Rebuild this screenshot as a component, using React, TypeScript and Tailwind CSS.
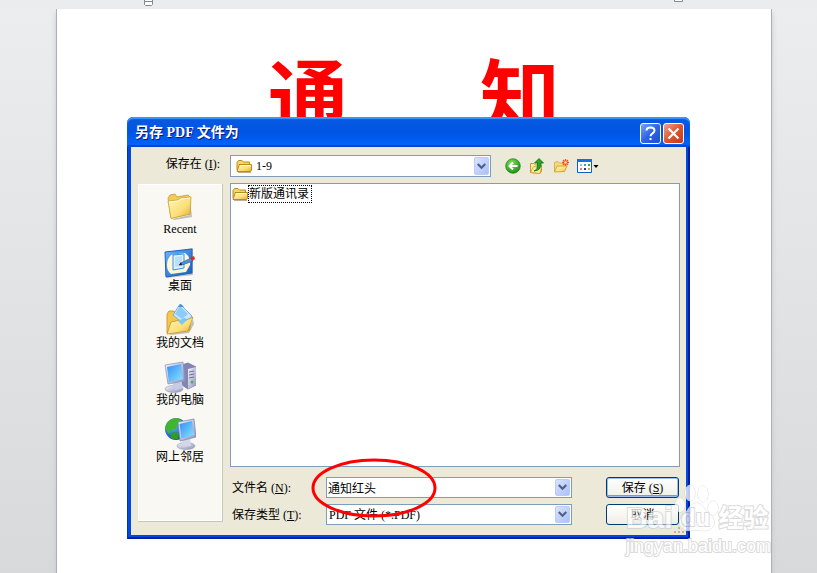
import { useState } from 'react'
import type { ReactNode } from 'react'

const Gradients = () => (
  <svg width="0" height="0" className="absolute" aria-hidden="true">
    <defs>
      <linearGradient id="folder" x1="0" y1="0" x2="1" y2="1">
        <stop offset="0" stopColor="#fff6b8" />
        <stop offset="0.6" stopColor="#fbdf78" />
        <stop offset="1" stopColor="#e2aa2e" />
      </linearGradient>
      <linearGradient id="screen" x1="0" y1="0" x2="1" y2="1">
        <stop offset="0" stopColor="#2f8df5" />
        <stop offset="1" stopColor="#8fe6ff" />
      </linearGradient>
      <linearGradient id="metal" x1="0" y1="0" x2="1" y2="1">
        <stop offset="0" stopColor="#f4f4fb" />
        <stop offset="1" stopColor="#8f92bd" />
      </linearGradient>
      <linearGradient id="desk" x1="0" y1="0" x2="1" y2="1">
        <stop offset="0" stopColor="#6db9f5" />
        <stop offset="1" stopColor="#1659bd" />
      </linearGradient>
      <radialGradient id="green" cx="0.4" cy="0.3" r="0.8">
        <stop offset="0" stopColor="#7fe05a" />
        <stop offset="1" stopColor="#15860f" />
      </radialGradient>
      <radialGradient id="globe" cx="0.35" cy="0.3" r="0.8">
        <stop offset="0" stopColor="#5cc3ff" />
        <stop offset="1" stopColor="#0b3fa8" />
      </radialGradient>
    </defs>
  </svg>
)

const SmallFolder = () => (
  <svg width="16" height="16" viewBox="0 0 16 16" className="shrink-0">
    <path d="M1 12V4.500L2.500 2.500H6L7.500 4H13.500V7" fill="#f7d66c" stroke="#b98a1c" />
    <path d="M1 13.500L3 7.500V6.500H15.500V12L14.500 13.500Z" fill="url(#folder)" stroke="#b98a1c" />
    <path d="M4 7.500H14.500" stroke="#fffbe0" />
    <path d="M2 14.500H15" stroke="#7d6420" strokeOpacity="0.5" />
  </svg>
)

const RecentIcon = () => (
  <svg width="32" height="32" viewBox="0 0 32 32">
    <path d="M8 29L26 25V11L28 27L10 30Z" fill="#555" opacity="0.35" />
    <path d="M4 8L6 5L11 4L13 7L24 5L26 7V24L7 28Z" fill="#f2cb5c" stroke="#c79a2c" strokeWidth="0.8" />
    <path d="M4 11L14 10L17 8L27 7L26 24L7 28.500Z" fill="url(#folder)" stroke="#cfa237" strokeWidth="0.8" />
    <path d="M5 12L14 11L17 9L26 8" fill="none" stroke="#fffbe0" />
  </svg>
)

const DesktopIcon = () => (
  <svg width="32" height="32" viewBox="0 0 32 32">
    <path d="M3 5L29 1L29 28L3 31L1 28Z" fill="#444" opacity="0.3" />
    <path d="M1 5L28 2V26L2 30Z" fill="url(#desk)" stroke="#1a62c0" />
    <path d="M3 18Q3 12 7 8L21 6Q27 10 26 18L22 25L7 27Q3 24 3 18Z" fill="#fdf8d8" />
    <path d="M9 8L20 7V21L9 23Z" fill="#dff1ff" stroke="#3c8fe0" />
    <path d="M11 10L18 9V19L11 20Z" fill="#b8e0fb" />
    <path d="M17 16L27 11L29 14L18 18L15 18Z" fill="#4f93dd" stroke="#1f5cab" strokeWidth="0.7" />
    <path d="M26 11L30 9L31 12L28 14Z" fill="#d7301d" />
    <path d="M15 18L17 15L18 18Z" fill="#222" />
  </svg>
)

const DocumentsIcon = () => (
  <svg width="32" height="32" viewBox="0 0 32 32">
    <path d="M5 30L24 27L29 15L30 20L25 29L7 31Z" fill="#555" opacity="0.35" />
    <path d="M3 29V10L5 7H10L12 10L25 9L26 26Z" fill="#f3c84e" stroke="#c5912a" strokeWidth="0.8" />
    <path d="M16 0L28 12L21 21L9 11Z" fill="#c9e8fd" stroke="#5fa4dd" strokeWidth="0.8" />
    <path d="M16 2L24 10L18 15L11 10Z" fill="#8ecbf7" />
    <path d="M15 2L17 0L20 3H14Z" fill="#3d8fe5" />
    <path d="M3 30L7 18L16 16L18 18L29 13L24 27Z" fill="url(#folder)" stroke="#c5912a" strokeWidth="0.8" />
    <path d="M14 17L20 14L24 15L18 21Z" fill="#7cc6f3" />
  </svg>
)

const ComputerIcon = () => (
  <svg width="32" height="32" viewBox="0 0 32 32">
    <path d="M18 4L24 2L32 6V24L24 28L18 24Z" fill="#8386b5" stroke="#686a9d" strokeWidth="0.7" />
    <path d="M24 8L32 6V24L24 28Z" fill="url(#metal)" />
    <path d="M25 11L30 10M25 14L30 13M25 17L30 16" stroke="#6a6c9c" />
    <circle cx="28" cy="21" r="1.500" fill="#40b840" />
    <ellipse cx="10" cy="28" rx="9" ry="3.500" fill="url(#metal)" stroke="#9295bb" strokeWidth="0.6" />
    <path d="M10 20L18 22L19 27L12 29L8 27Z" fill="#c9cbe4" />
    <path d="M1 4L19 1L21 20L4 23Z" fill="url(#metal)" stroke="#8b8eb5" strokeWidth="0.7" />
    <path d="M3 6L17 3L19 18L5 21Z" fill="url(#screen)" />
  </svg>
)

const NetworkIcon = () => (
  <svg width="32" height="32" viewBox="0 0 32 32">
    <circle cx="12" cy="11" r="11" fill="url(#globe)" />
    <path d="M3 5Q7 0 14 0L18 3L14 6L12 11L7 12L5 16L1 10Z" fill="#41b52c" />
    <path d="M9 14L15 15L14 21Q9 22 6 19Z" fill="#2f9c22" />
    <ellipse cx="22" cy="28" rx="9" ry="3.500" fill="url(#metal)" stroke="#9295bb" strokeWidth="0.6" />
    <path d="M18 21L26 20L27 28L19 29Z" fill="#d5d6e8" />
    <path d="M14 4L30 1L32 19L16 23Z" fill="url(#metal)" stroke="#7d80ac" strokeWidth="0.7" />
    <path d="M15.500 6L28 3L30 17L17.500 20.500Z" fill="url(#screen)" />
  </svg>
)

const BackIcon = () => (
  <svg width="16" height="16" viewBox="0 0 16 16">
    <circle cx="8" cy="8" r="7.300" fill="url(#green)" stroke="#1a7d14" strokeWidth="0.7" />
    <path d="M12.500 8H5M8 4.500L4.500 8L8 11.500" fill="none" stroke="#fff" strokeWidth="2" />
  </svg>
)

const UpIcon = () => (
  <svg width="16" height="16" viewBox="0 0 16 16">
    <path d="M1.500 5.500H5L6.500 7H12.500V13L11 15.500L1.500 14.500Z" fill="url(#folder)" stroke="#c79a2c" />
    <path d="M1.500 14.500L4.500 8.500L12.500 9L11 15.500Z" fill="#fdea9b" stroke="#c79a2c" strokeWidth="0.7" />
    <path d="M5 13Q9 12 8.500 5H5.500L10 0.500L14.500 5H12Q12.500 12.500 5 13Z" fill="#25a521" stroke="#126b16" strokeWidth="0.8" />
  </svg>
)

const NewFolderIcon = () => (
  <svg width="16" height="16" viewBox="0 0 16 16">
    <path d="M1.500 13V4.500L5 3.500L6.500 5H12.500V11Z" fill="#f9db7a" stroke="#d0a53e" strokeWidth="0.8" />
    <path d="M1.500 14L4 8H14L11.500 13.500Z" fill="url(#folder)" stroke="#c79a2c" strokeWidth="0.8" />
    <path d="M12.500 1V8M9 4.500H16M10 2L15 7M15 2L10 7" stroke="#f0552b" strokeWidth="1.300" />
    <circle cx="12.500" cy="4.500" r="1.300" fill="#ffe9a0" />
  </svg>
)

const ViewsIcon = () => (
  <svg width="24" height="16" viewBox="0 0 24 16">
    <path d="M0.500 1.500H14.500V14.500H0.500Z" fill="#fff" stroke="#0a5fc4" />
    <path d="M0 1H15V4H0Z" fill="#1272dc" />
    <path d="M3 6H5V8H3Z" fill="#a9b4e6" />
    <path d="M7 6H9V8H7Z" fill="#3aa0d8" />
    <path d="M11 6H13V8H11Z" fill="#3fa63f" />
    <path d="M3 10H5V12H3Z" fill="#ec8264" />
    <path d="M7 10H9V12H7Z" fill="#1b3f9d" />
    <path d="M11 10H13V12H11Z" fill="#d8a718" />
    <path d="M16.500 7H21.500L19 10Z" fill="#000" />
  </svg>
)

const Chevron = () => (
  <svg width="9" height="7" viewBox="0 0 9 7">
    <path d="M0.700 1L4.500 4.800L8.300 1" fill="none" stroke="#4d6185" strokeWidth="2.200" />
  </svg>
)

const arrowBox =
  'absolute inset-y-px right-px flex w-[15px] items-center justify-center rounded-xs border border-[#b9cbf8] bg-linear-to-br from-[#d8e4fe] to-[#aebffa]'

const places: { label: string; icon: ReactNode }[] = [
  { label: 'Recent', icon: <RecentIcon /> },
  { label: '桌面', icon: <DesktopIcon /> },
  { label: '我的文档', icon: <DocumentsIcon /> },
  { label: '我的电脑', icon: <ComputerIcon /> },
  { label: '网上邻居', icon: <NetworkIcon /> },
]

const tools = [
  { name: 'Back', icon: <BackIcon /> },
  { name: 'Up', icon: <UpIcon /> },
  { name: 'New folder', icon: <NewFolderIcon /> },
  { name: 'Views', icon: <ViewsIcon /> },
]

function TitleBar() {
  return (
    <header className="flex h-[30px] items-center gap-[2px] rounded-t-md bg-linear-to-b from-[#0a5ae0] via-[#0054e3] to-[#0066ff] pt-[2px] pr-[6px] pl-2 shadow-[inset_0_2px_1px_#3d95ff,inset_0_-2px_1px_#0048cf]">
      <h2 className="flex-1 text-[14px] leading-5 font-bold text-white [text-shadow:1px_1px_0_#0a1883]">
        另存 PDF 文件为
      </h2>
      <button
        aria-label="Help"
        className="flex size-[21px] items-center justify-center rounded-[3px] border border-white bg-linear-to-br from-[#7aa2f7] via-[#2f63e6] to-[#1c50d2]"
      >
        <svg width="13" height="15" viewBox="0 0 13 15">
          <path d="M2.500 4.500Q2.500 1.500 6.500 1.500Q10.500 1.500 10.500 4.500Q10.500 6 8.500 7.300Q6.500 8.500 6.500 10.300M6.500 12V14" fill="none" stroke="#fff" strokeWidth="2" />
        </svg>
      </button>
      <button
        aria-label="Close"
        className="flex size-[21px] items-center justify-center rounded-[3px] border border-white bg-linear-to-br from-[#f0a08a] via-[#e0532f] to-[#c43a10]"
      >
        <svg width="13" height="13" viewBox="0 0 13 13">
          <path d="M1.500 1.500L11.500 11.500M11.500 1.500L1.500 11.500" stroke="#fff" strokeWidth="2.200" />
        </svg>
      </button>
    </header>
  )
}

function SaveDialog() {
  const [fileName, setFileName] = useState('通知红头')

  return (
    <section className="absolute inset-x-[127px] top-[117px] rounded-t-lg bg-[#0048e0] shadow-[inset_1px_0_0_#0030c0,inset_-2px_-2px_0_#001ea0]">
      <TitleBar />
      <form
        className="relative mx-1 flex flex-col gap-[6px] bg-[#ece9d8] pt-2 pr-[6px] pb-[10px] pl-[7px]"
        onSubmit={(e) => e.preventDefault()}
      >
        <div className="flex items-center pr-[79px]">
          <label htmlFor="look-in" className="w-[92px] shrink-0 pr-[10px] pb-1 text-right">
            保存在 (<u>I</u>):
          </label>
          <div className="relative h-[22px] flex-1 border border-[#7f9db9] bg-white">
            <span className="pointer-events-none absolute top-[2px] left-[5px]">
              <SmallFolder />
            </span>
            <select id="look-in" className="block h-5 w-full appearance-none pl-[25px]">
              <option>1-9</option>
            </select>
            <span className={`pointer-events-none ${arrowBox}`}>
              <Chevron />
            </span>
          </div>
          <div className="flex gap-2 pl-[14px]">
            {tools.map(({ name, icon }) => (
              <button key={name} type="button" aria-label={name}>
                {icon}
              </button>
            ))}
          </div>
        </div>

        <div className="flex gap-[7px]">
          <nav className="mt-px mb-[3px] flex w-[85px] shrink-0 flex-col gap-[11px] border-r border-b border-[#c9c6b4] bg-[#f9f8f3] pt-[6px] shadow-[inset_1px_1px_0_#fff,inset_-1px_-1px_0_#fff]">
            {places.map(({ label, icon }) => (
              <button key={label} type="button" className="flex flex-col items-center leading-[14px]">
                {icon}
                {label}
              </button>
            ))}
          </nav>

          <div className="flex min-w-0 flex-1 flex-col">
            <div className="min-h-[284px] border border-[#7f9db9] bg-white p-px">
              <button type="button" className="flex items-center">
                <SmallFolder />
                <span className="border border-dotted border-black pr-[2px] leading-4">新版通讯录</span>
              </button>
            </div>

            <div className="mt-[10px] flex items-center">
              <label htmlFor="file-name" className="w-24 shrink-0 pl-[2px]">
                文件名 (<u>N</u>):
              </label>
              <div className="relative h-[21px] flex-1 border border-[#7f9db9] bg-white">
                <input
                  id="file-name"
                  value={fileName}
                  onChange={(e) => setFileName(e.target.value)}
                  className="block h-[19px] w-full pl-px outline-none"
                />
                <button type="button" aria-label="Recent names" className={arrowBox}>
                  <Chevron />
                </button>
                <svg
                  width="126"
                  height="60"
                  viewBox="0 0 126 60"
                  className="pointer-events-none absolute -top-5 -left-4 z-10"
                >
                  <ellipse cx="63" cy="30" rx="61" ry="28" fill="none" stroke="#f00" strokeWidth="3" />
                </svg>
              </div>
              <button className="mr-px ml-[34px] h-[21px] w-[73px] rounded-[3px] border border-[#003c74] bg-linear-to-b from-white to-[#f0efe8] shadow-[inset_0_0_0_1px_#9dbdf2,inset_0_-2px_0_#7b94e8]">
                保存 (<u>S</u>)
              </button>
            </div>

            <div className="mt-[6px] flex items-center">
              <label htmlFor="file-type" className="w-24 shrink-0 pl-[2px]">
                保存类型 (<u>T</u>):
              </label>
              <div className="relative h-[21px] flex-1 border border-[#7f9db9] bg-white">
                <select id="file-type" className="block h-[19px] w-full appearance-none pl-[2px]">
                  <option>PDF 文件 (*.PDF)</option>
                </select>
                <span className={`pointer-events-none ${arrowBox}`}>
                  <Chevron />
                </span>
              </div>
              <button
                type="button"
                className="mr-px ml-[34px] h-[21px] w-[73px] rounded-[3px] border border-[#003c74] bg-linear-to-b from-white to-[#efeee6]"
              >
                取消
              </button>
            </div>
          </div>
        </div>
        <svg width="11" height="11" viewBox="0 0 11 11" className="absolute right-px bottom-px">
          <path d="M8 0H10V2H8ZM4 4H6V6H4ZM8 4H10V6H8ZM0 8H2V10H0ZM4 8H6V10H4ZM8 8H10V10H8Z" fill="#b8b4a2" />
        </svg>
      </form>
      <div className="h-1" />
    </section>
  )
}

function Watermark() {
  return (
    <div className="pointer-events-none absolute top-[484px] right-[46px] font-['Liberation_Sans','Noto_Sans_CJK_SC',sans-serif] text-white opacity-75 [paint-order:stroke_fill] [-webkit-text-stroke:2px_#cfcfcf]">
      <div className="flex items-end leading-[32px] font-bold">
        <span className="text-[30px]">Bai</span>
        <span className="relative flex h-[50px] w-[46px] items-end justify-center text-[24px]">
          <svg width="46" height="50" viewBox="0 0 46 50" className="absolute inset-0">
            <g fill="#fff" stroke="#cfcfcf">
              <ellipse cx="7" cy="21" rx="5" ry="7" />
              <ellipse cx="17" cy="9" rx="5" ry="8" />
              <ellipse cx="30" cy="10" rx="5" ry="8" />
              <ellipse cx="40" cy="24" rx="5" ry="7" />
              <path d="M24 19Q29 19 33 27Q43 34 41 41Q38 49 24 46Q10 49 7 41Q5 34 14 27Q18 19 24 19Z" />
            </g>
          </svg>
          <span className="relative">du</span>
        </span>
        <span className="text-[25px]">经验</span>
      </div>
      <div className="text-[18px] leading-6">jingyan.baidu.com</div>
    </div>
  )
}

export default function App() {
  return (
    <div className="relative flex min-h-screen flex-col overflow-hidden bg-linear-to-b from-[#ecedef] to-[#d8d9db] font-['Liberation_Serif','Noto_Sans_CJK_SC',serif] text-[12px] leading-4 text-black">
      <Gradients />
      <div className="flex h-[9px] items-start justify-between bg-[#ebecee] pr-[134px] pl-[144px]">
        <svg width="9" height="6" viewBox="0 0 9 6">
          <path d="M0.500 0V4.500L1.500 5.500H7.500L8.500 4.500V0M0.500 1.500H8.500" fill="#fff" stroke="#85878a" />
        </svg>
        <svg width="9" height="2" viewBox="0 0 9 2">
          <path d="M0.500 0V1.500H8.500V0" fill="#fff" stroke="#85878a" />
        </svg>
      </div>
      <main className="mr-[45px] ml-14 flex-1 border-x border-[#acb0b7] bg-white pt-[50px] shadow-[0_4px_5px_#c5c7cb]">
        <h1 className="flex justify-center gap-[132px] text-[80px] leading-[80px] font-bold text-[#f00]">
          <span>通</span>
          <span>知</span>
        </h1>
      </main>
      <SaveDialog />
      <Watermark />
    </div>
  )
}
